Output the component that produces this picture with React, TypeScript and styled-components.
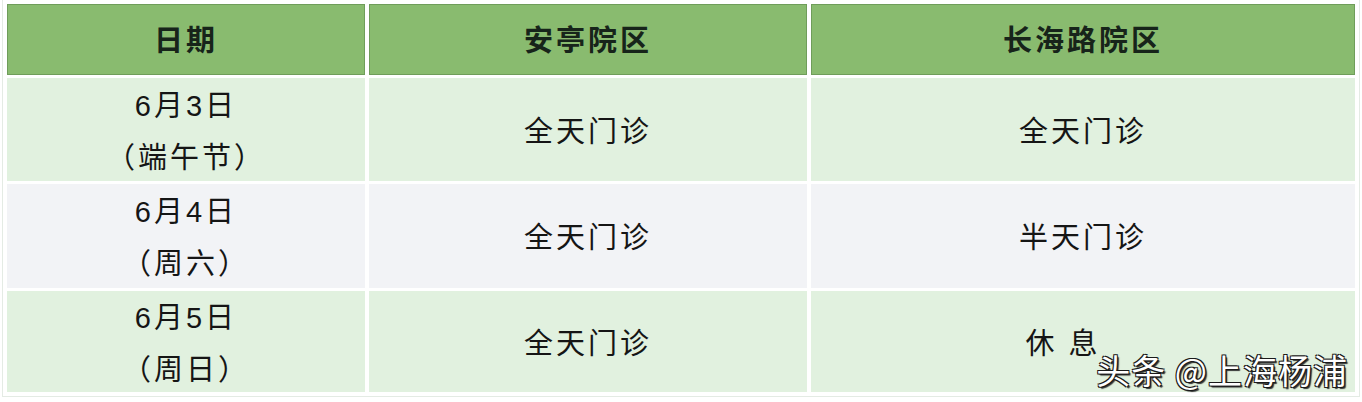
import React from "react"
import styled, { createGlobalStyle } from "styled-components"

const GlobalStyle = createGlobalStyle`
  html, body {
    margin: 0;
    padding: 0;
    background: #ffffff;
  }
  body {
    font-family: "Liberation Sans", "Noto Sans CJK SC", sans-serif;
  }
`

const Frame = styled.div`
  position: relative;
  width: 1362px;
  height: 402px;
  box-sizing: border-box;
  padding: 4px 0 0 7px;
  overflow: hidden;
`

const Outline = styled.div`
  position: absolute;
  left: 2px;
  top: 0;
  width: 1358px;
  height: 397px;
  box-sizing: border-box;
  border: 1px solid #e4ebe4;
  border-top: none;
  pointer-events: none;
`

const Table = styled.div`
  display: grid;
  grid-template-columns: 358px 438px 544px;
  grid-template-rows: 71px 103px 104px 101px;
  column-gap: 4px;
  row-gap: 3px;
`

const HeadCell = styled.div`
  display: flex;
  align-items: center;
  justify-content: center;
  background: #89bb6f;
  border: 1px solid #6f9d5a;
  box-sizing: border-box;
  color: #17241a;
  font-size: 29px;
  font-weight: 700;
  letter-spacing: 3px;
  padding-bottom: 4px;
`

const Cell = styled.div<{ $tone: "green" | "grey" }>`
  display: flex;
  flex-direction: column;
  align-items: center;
  justify-content: center;
  padding-top: 4px;
  box-sizing: border-box;
  background: ${p => (p.$tone === "green" ? "#e1f1df" : "#f2f3f6")};
  color: #151515;
  font-size: 29px;
  line-height: 52px;
  letter-spacing: 3px;
`

const Line = styled.span`
  display: block;
  white-space: nowrap;
`

const Rest = styled.span`
  padding-right: 40px;
  white-space: pre;
  letter-spacing: 3px;
`

const Watermark = styled.div`
  position: absolute;
  right: 14px;
  bottom: 8px;
  color: #ffffff;
  font-family: "Noto Sans CJK SC", sans-serif;
  font-size: 34px;
  letter-spacing: 1px;
  text-shadow:
    -1px -1px 0 #1a1a1a,
    1px -1px 0 #1a1a1a,
    -1px 1px 0 #1a1a1a,
    1px 1px 0 #1a1a1a,
    2px 2px 1px #333333;
`

interface Row {
  date: string
  day: string
  anting: string
  changhai: string
}

const ROWS: Row[] = [
  { date: "6月3日", day: "（端午节）", anting: "全天门诊", changhai: "全天门诊" },
  { date: "6月4日", day: "（周六）", anting: "全天门诊", changhai: "半天门诊" },
  { date: "6月5日", day: "（周日）", anting: "全天门诊", changhai: "休 息" },
]

export default function App() {
  return (
    <>
      <GlobalStyle />
      <Frame>
        <Outline />
        <Table>
          <HeadCell>日期</HeadCell>
          <HeadCell>安亭院区</HeadCell>
          <HeadCell>长海路院区</HeadCell>
          {ROWS.map((row, i) => {
            const tone = i % 2 === 0 ? "green" : "grey"
            return (
              <React.Fragment key={row.date}>
                <Cell $tone={tone}>
                  <Line>{row.date}</Line>
                  <Line>{row.day}</Line>
                </Cell>
                <Cell $tone={tone}>
                  <Line>{row.anting}</Line>
                </Cell>
                <Cell $tone={tone}>
                  {row.changhai === "休 息" ? (
                    <Rest>{row.changhai}</Rest>
                  ) : (
                    <Line>{row.changhai}</Line>
                  )}
                </Cell>
              </React.Fragment>
            )
          })}
        </Table>
        <Watermark>头条 @上海杨浦</Watermark>
      </Frame>
    </>
  )
}
